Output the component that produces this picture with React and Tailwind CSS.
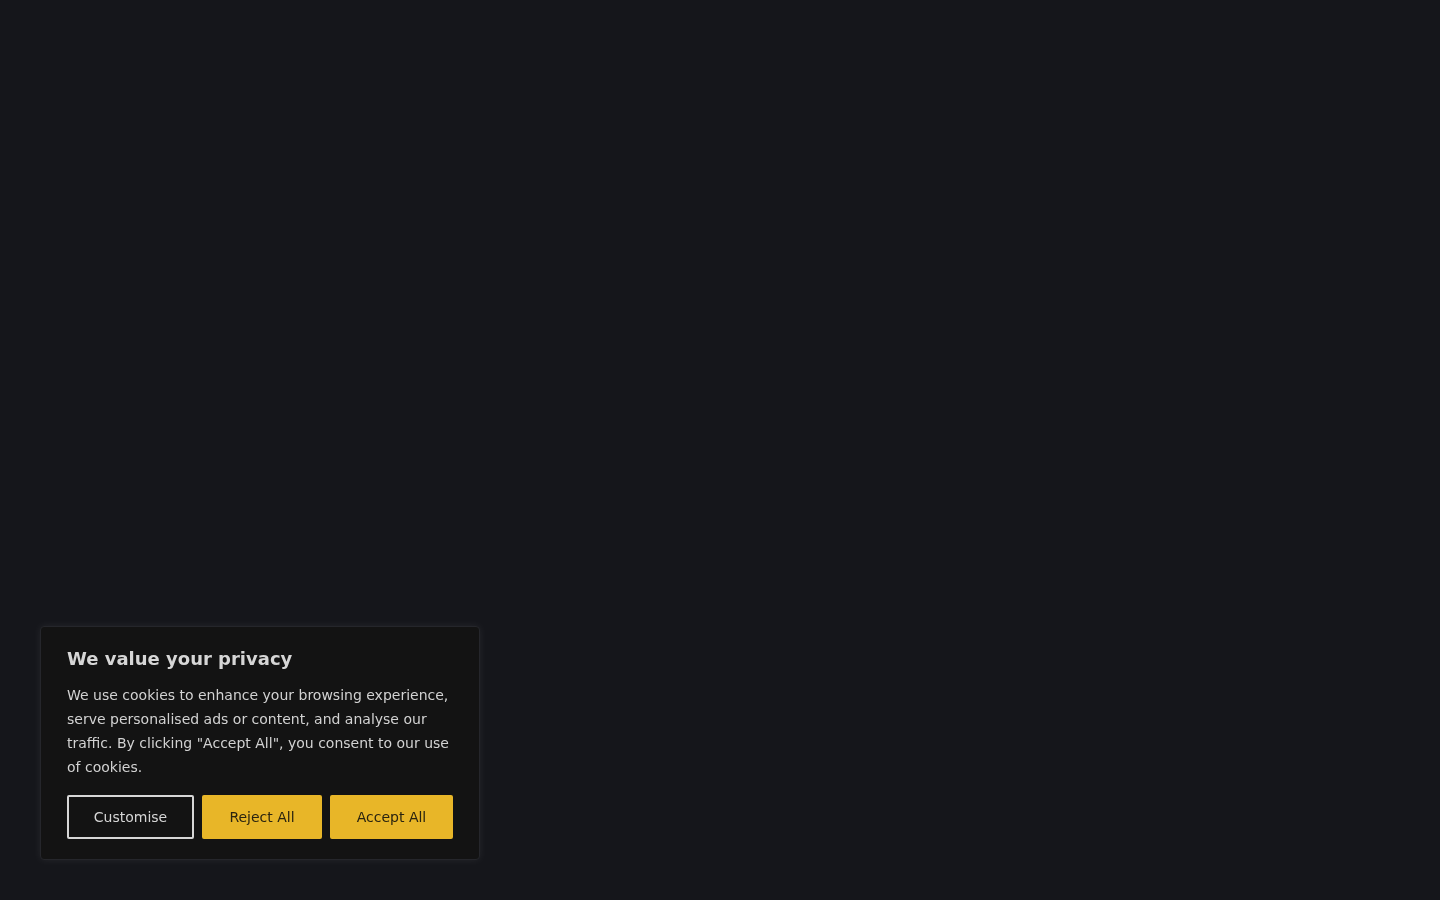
export default function App() {
  return (
    <div className="min-h-screen w-full bg-[#15161b] relative" style={{ fontFamily: '"DejaVu Sans", sans-serif' }}>
      <div className="fixed left-[40px] bottom-[40px] w-[440px] bg-[#131313] border border-[#25262b] rounded-[4px] shadow-[0_0_8px_rgba(255,255,255,0.07)] px-[26px] pt-[21px] pb-[20px]">
        <h2 className="text-[18px] font-bold leading-[21px] text-[#d6d6d6] m-0">We value your privacy</h2>
        <p className="mt-[14px] text-[14px] leading-[24px] text-[#d2d2d2]">
          We use cookies to enhance your browsing experience, serve personalised ads or content, and analyse our traffic. By clicking "Accept All", you consent to our use of cookies.
        </p>
        <div className="mt-[16px] flex gap-[8px]">
          <button className="h-[44px] w-[127px] border-2 border-[#d6d6d6] bg-transparent text-[#d6d6d6] text-[14px] rounded-[2px]">Customise</button>
          <button className="h-[44px] w-[120px] border-2 border-[#e8b628] bg-[#e8b628] text-[#2a2410] text-[14px] rounded-[2px]">Reject All</button>
          <button className="h-[44px] w-[123px] border-2 border-[#e8b628] bg-[#e8b628] text-[#2a2410] text-[14px] rounded-[2px]">Accept All</button>
        </div>
      </div>
    </div>
  );
}
